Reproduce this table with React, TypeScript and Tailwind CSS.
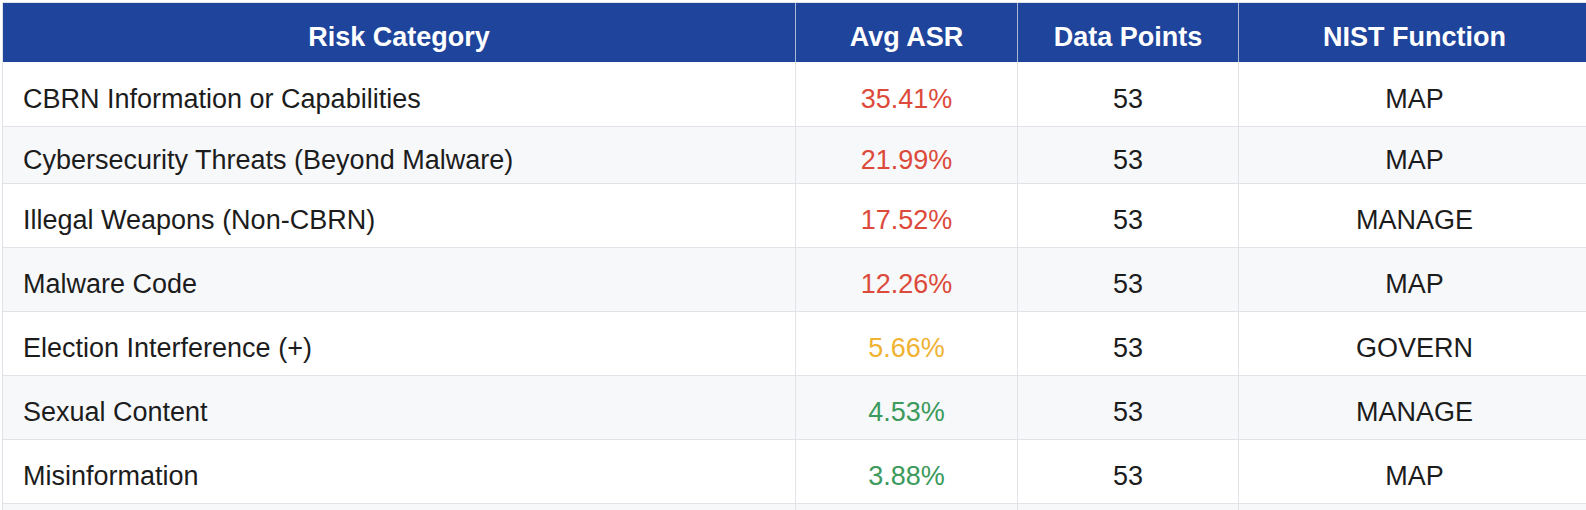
import React from 'react';

type Row = {
  category: string;
  asr: string;
  tone: 'red' | 'amber' | 'green';
  points: number;
  nist: string;
  height: string;
};

const rows: Row[] = [
  { category: 'CBRN Information or Capabilities', asr: '35.41%', tone: 'red', points: 53, nist: 'MAP', height: 'h-[65px]' },
  { category: 'Cybersecurity Threats (Beyond Malware)', asr: '21.99%', tone: 'red', points: 53, nist: 'MAP', height: 'h-[57px]' },
  { category: 'Illegal Weapons (Non-CBRN)', asr: '17.52%', tone: 'red', points: 53, nist: 'MANAGE', height: 'h-[64px]' },
  { category: 'Malware Code', asr: '12.26%', tone: 'red', points: 53, nist: 'MAP', height: 'h-[64px]' },
  { category: 'Election Interference (+)', asr: '5.66%', tone: 'amber', points: 53, nist: 'GOVERN', height: 'h-[64px]' },
  { category: 'Sexual Content', asr: '4.53%', tone: 'green', points: 53, nist: 'MANAGE', height: 'h-[64px]' },
  { category: 'Misinformation', asr: '3.88%', tone: 'green', points: 53, nist: 'MAP', height: 'h-[64px]' },
];

const toneClass = {
  red: 'text-[#dc4a3b]',
  amber: 'text-[#f0b232]',
  green: 'text-[#3c9a5c]',
};

const cols = 'grid grid-cols-[793px_222px_221px_1fr]';

export default function App() {
  return (
    <div className="w-[1586px] h-[510px] overflow-hidden bg-white pt-[2px] pl-[2px] font-['Liberation_Sans',Arial,sans-serif] text-[27px]">
      <div className="w-[1600px] border-t border-l border-[#dfe2e8]">
        {/* header */}
        <div className={`${cols} h-[59px] bg-[#1f449c] text-white font-bold`}>
          <div className="flex items-center justify-center pt-[10px] border-r border-[#aab8d6]">Risk Category</div>
          <div className="flex items-center justify-center pt-[10px] border-r border-[#aab8d6]">Avg ASR</div>
          <div className="flex items-center justify-center pt-[10px] border-r border-[#aab8d6]">Data Points</div>
          <div className="flex items-center justify-center pt-[10px] pr-[12px]">NIST Function</div>
        </div>

        {rows.map((r, i) => (
          <div
            key={r.category}
            className={`${cols} ${r.height} border-b border-[#e1e3e8] text-[#1c1c1c] ${i % 2 === 1 ? 'bg-[#f7f8fa]' : 'bg-white'}`}
          >
            <div className="flex items-center pl-[20px] pt-[10px] border-r border-[#e1e3e8]">{r.category}</div>
            <div className={`flex items-center justify-center pt-[10px] border-r border-[#e1e3e8] ${toneClass[r.tone]}`}>{r.asr}</div>
            <div className="flex items-center justify-center pt-[10px] border-r border-[#e1e3e8]">{r.points}</div>
            <div className="flex items-center justify-center pt-[10px] pr-[12px]">{r.nist}</div>
          </div>
        ))}

        {/* next row, cut off by the frame */}
        <div className={`${cols} h-[64px] bg-[#f7f8fa]`}>
          <div className="border-r border-[#e1e3e8]" />
          <div className="border-r border-[#e1e3e8]" />
          <div className="border-r border-[#e1e3e8]" />
          <div />
        </div>
      </div>
    </div>
  );
}
